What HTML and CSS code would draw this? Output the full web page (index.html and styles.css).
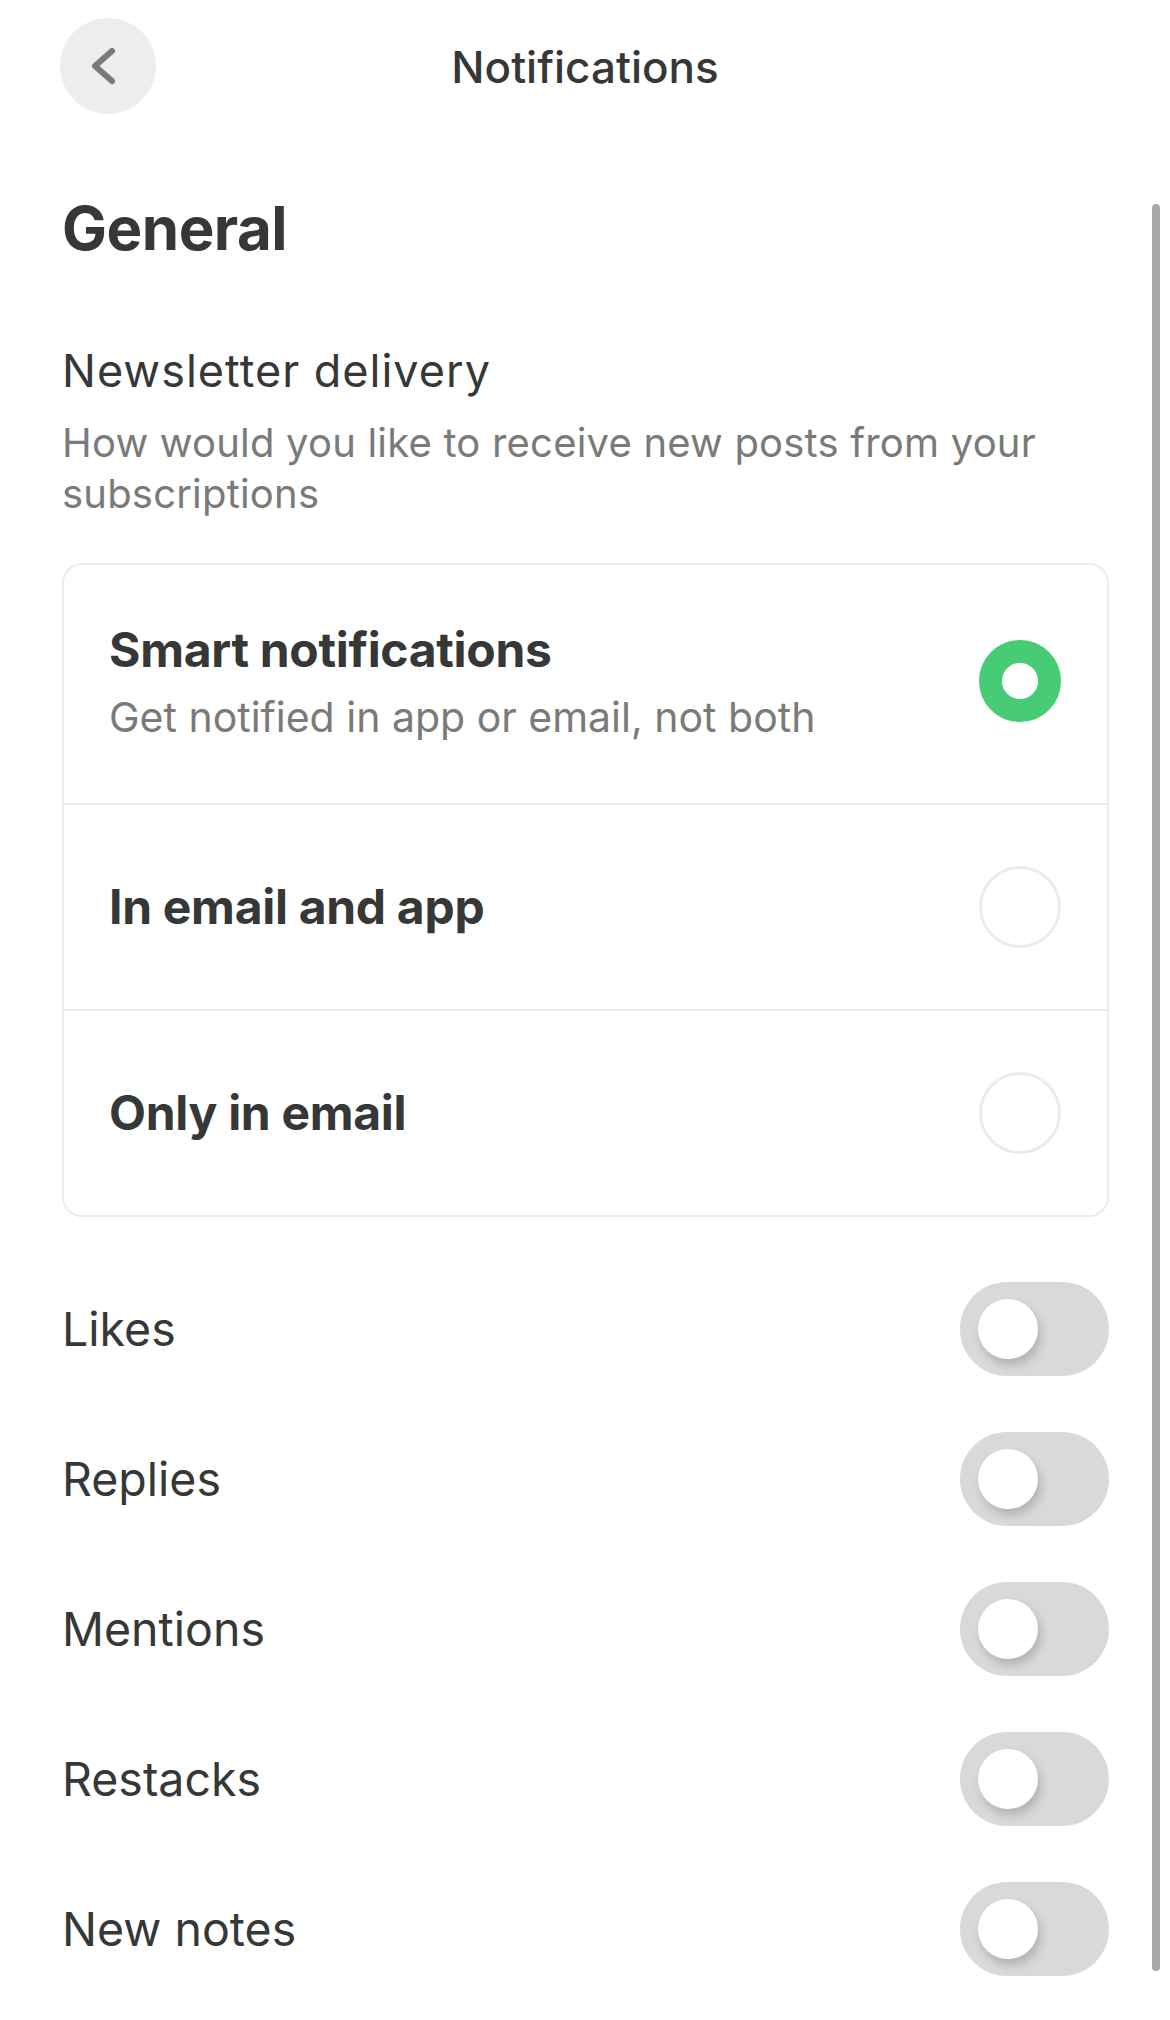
FILE: index.html
```html
<!DOCTYPE html>
<html>
	<head>
		<meta charset="UTF-8">
		<title>Notifications</title>
		<link rel="stylesheet" href="styles.css">
	</head>
	<body>
		<!--顶部导航-->
		<div class="topbar">
			<div class="back">
				<svg width="96" height="96" viewBox="0 0 96 96">
					<path d="M52 33 L35 48 L52 63" fill="none" stroke="#7a7a7a" stroke-width="6" stroke-linecap="round" stroke-linejoin="round"/>
				</svg>
			</div>
			<div class="title">Notifications</div>
			<div></div>
		</div>

		<div class="content">
			<h1 class="section">General</h1>
			<h2 class="label">Newsletter delivery</h2>
			<p class="desc">How would you like to receive new posts from your subscriptions</p>

			<!--投递方式-->
			<ul class="options">
				<li class="option first">
					<div class="text">
						<div class="name">Smart notifications</div>
						<div class="sub">Get notified in app or email, not both</div>
					</div>
					<span class="radio on"></span>
				</li>
				<li class="option">
					<div class="text">
						<div class="name">In email and app</div>
					</div>
					<span class="radio"></span>
				</li>
				<li class="option">
					<div class="text">
						<div class="name">Only in email</div>
					</div>
					<span class="radio"></span>
				</li>
			</ul>

			<!--开关列表-->
			<ul class="switches">
				<li><span>Likes</span><i class="toggle"></i></li>
				<li><span>Replies</span><i class="toggle"></i></li>
				<li><span>Mentions</span><i class="toggle"></i></li>
				<li><span>Restacks</span><i class="toggle"></i></li>
				<li><span>New notes</span><i class="toggle"></i></li>
			</ul>
		</div>

		<div class="scrollbar"></div>
	</body>
</html>
```

FILE: styles.css
```css
body,ul,li,h1,h2,p{
	margin: 0;
	padding: 0;
}
li{
	list-style: none;
}
body{
	position: relative;
	width: 1170px;
	min-height: 2020px;
	background: #fff;
	font-family: Inter, "Noto Sans", sans-serif;
	color: #363737;
}
.topbar{
	display: grid;
	grid-template-columns: 96px 1fr 96px;
	align-items: center;
	padding: 17px 60px 0;
}
.back{
	width: 96px;
	height: 96px;
	border-radius: 50%;
	background: #ededed;
}
.back svg{
	display: block;
}
.title{
	margin-top: 2px;
	text-align: center;
	font-size: 44px;
	font-weight: 500;
	line-height: 96px;
}
.content{
	padding: 0 61px 0 62px;
}
.section{
	margin-top: 76px;
	font-size: 60px;
	font-weight: 700;
	line-height: 74px;
	letter-spacing: -0.5px;
}
.label{
	margin-top: 81px;
	font-size: 45px;
	font-weight: 400;
	line-height: 50px;
	letter-spacing: 1px;
}
.desc{
	margin-top: 21px;
	font-size: 40px;
	line-height: 51px;
	letter-spacing: 0.2px;
	color: #7a7a7a;
}
.options{
	margin-top: 44px;
	border: 2px solid #ececec;
	border-radius: 20px;
}
.option{
	display: flex;
	align-items: center;
	justify-content: space-between;
	padding: 61px 46px 61px 45px;
	border-top: 2px solid #ececec;
}
.option.first{
	padding: 55px 46px 61px 45px;
	border-top: none;
}
.name{
	font-size: 48px;
	font-weight: 700;
	line-height: 60px;
	letter-spacing: -0.3px;
}
.sub{
	margin-top: 12px;
	font-size: 41px;
	line-height: 50px;
	color: #7a7a7a;
}
.radio{
	width: 82px;
	height: 82px;
	box-sizing: border-box;
	border-radius: 50%;
	border: 3px solid #ebebeb;
}
.radio.on{
	border: 23px solid #47cc75;
}
.switches{
	margin-top: 37px;
}
.switches li{
	display: flex;
	align-items: center;
	justify-content: space-between;
	padding: 28px 0;
	font-size: 46.5px;
	line-height: 94px;
}
.toggle{
	position: relative;
	width: 149px;
	height: 94px;
	border-radius: 47px;
	background: #d9d9d9;
}
.toggle:after{
	position: absolute;
	left: 18px;
	top: 17px;
	width: 60px;
	height: 60px;
	border-radius: 50%;
	background: #fff;
	box-shadow: 3px 6px 10px rgba(0,0,0,.18);
	content: "";
}
/*右侧滚动条*/
.scrollbar{
	position: absolute;
	right: 10px;
	top: 204px;
	width: 8px;
	height: 1767px;
	border-radius: 4px;
	background: #a8a8a8;
}
```
